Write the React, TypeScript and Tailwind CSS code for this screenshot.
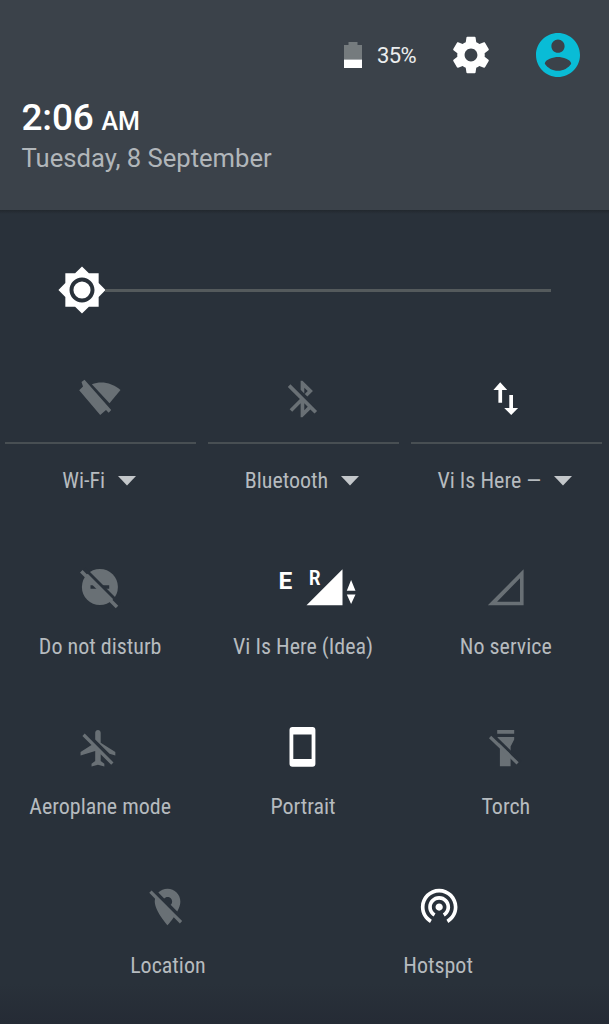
import type { ReactNode } from 'react';

interface TileProps {
  label: string;
  active?: boolean;
  wide?: boolean;
  children: ReactNode;
}

const BatteryIcon = () => (
  <svg width="18" height="26" viewBox="0 0 18 26">
    <path d="M0 3h4.500V0h9v3H18v14.500H0z" fill="#757b7e" />
    <path d="M0 17.500h18V26H0z" fill="#fff" />
  </svg>
);

const SettingsIcon = () => (
  <svg width="44" height="44" viewBox="0 0 24 24" fill="#fff">
    <path d="M19.43 12.98c.04-.32.07-.64.07-.98s-.03-.66-.07-.98l2.11-1.65c.19-.15.24-.42.12-.64l-2-3.46c-.12-.22-.39-.3-.61-.22l-2.49 1c-.52-.4-1.080-.73-1.690-.98l-.38-2.650C14.460 2.180 14.250 2 14 2h-4c-.25 0-.46.18-.49.42l-.38 2.650c-.61.25-1.170.59-1.690.98l-2.490-1c-.23-.09-.49 0-.61.22l-2 3.460c-.13.22-.07.49.12.64l2.110 1.650c-.04.32-.07.65-.07.98s.03.66.07.98l-2.110 1.650c-.19.15-.24.42-.12.64l2 3.460c.12.22.39.3.61.22l2.490-1c.52.4 1.080.73 1.690.98l.38 2.650c.03.24.24.42.49.42h4c.25 0 .46-.18.49-.42l.38-2.650c.61-.25 1.170-.59 1.690-.98l2.490 1c.23.09.49 0 .61-.22l2-3.460c.12-.22.07-.49-.12-.64l-2.110-1.650zM12 15.500c-1.930 0-3.500-1.570-3.500-3.500s1.570-3.500 3.500-3.500 3.500 1.570 3.500 3.500-1.570 3.500-3.500 3.500z" />
  </svg>
);

const UserIcon = () => (
  <svg width="44" height="44" viewBox="2 2 20 20" fill="#09bcd6">
    <path d="M12 2C6.480 2 2 6.480 2 12s4.480 10 10 10 10-4.480 10-10S17.520 2 12 2zm0 3c1.660 0 3 1.340 3 3s-1.340 3-3 3-3-1.340-3-3 1.340-3 3-3zm0 14.200c-2.500 0-4.710-1.280-6-3.220.03-1.990 4-3.080 6-3.080 1.990 0 5.970 1.090 6 3.080-1.290 1.940-3.500 3.220-6 3.220z" />
  </svg>
);

const BrightnessIcon = () => (
  <svg width="50" height="50" viewBox="0 0 24 24" fill="#fff">
    <path d="M20 8.690V4h-4.690L12 .69 8.690 4H4v4.690L.69 12 4 15.310V20h4.690L12 23.310 15.310 20H20v-4.690L23.310 12 20 8.690zM12 18c-3.310 0-6-2.690-6-6s2.690-6 6-6 6 2.690 6 6-2.690 6-6 6z" />
    <circle cx="12" cy="12" r="4.100" />
  </svg>
);

const WifiOff = () => (
  <>
    <path d="M4.500 8 7.500 5.800 34.200 36l-2.500 2.700L29 36l-5.800 5L2.200 16.200 6 12.500z" />
    <path d="M14.900 10.200C24 6.500 35 8.500 43.500 16L32.500 29.300z" />
  </>
);

const BluetoothOff = () => (
  <path
    transform="translate(1.500 3) scale(1.83)"
    d="M13 5.830l1.880 1.880-1.600 1.600 1.410 1.410 3.020-3.020L12 2h-1v5.030l2 2v-3.200zM5.410 4L4 5.410 10.590 12 5 17.590 6.410 19 11 14.410V22h1l4.290-4.290 2.300 2.290L20 18.590 5.410 4zM13 18.170v-3.760l1.880 1.880L13 18.170z"
  />
);

const DataArrows = () => (
  <>
    <path d="M18.200 8.200 25.200 16h-5.100v12.700h-3.700V16h-5z" />
    <path d="M29.200 41 22.200 34h5.100V21H31v13h5.100z" />
  </>
);

const DisturbOff = () => (
  <>
    <circle cx="22.900" cy="23" r="18" />
    <path d="M13.500 21.200h7.500v3.600h-7.500zM25 21.200h7.200v3.600H28z" fill="#29313a" />
    <path d="M7.500 4.500 42.500 39.500" stroke="#29313a" strokeWidth="2.800" />
    <path d="M4.300 7.300 40 43" stroke="currentColor" strokeWidth="3.600" />
  </>
);

const MobileSignal = () => (
  <>
    <text x="35.500" y="25.300" className="font-[Roboto] text-[24.500px] font-bold">E</text>
    <text x="66" y="21.200" textLength="11.500" lengthAdjust="spacingAndGlyphs" className="font-[Roboto] text-[21px] font-bold">R</text>
    <path d="M63.500 41.300 99.500 5.300v36z" />
    <path d="M108.100 16 112.500 26.700h-8.700zM103.800 30.500h8.700l-4.400 9.500z" />
  </>
);

const NoSignal = () => (
  <path fillRule="evenodd" d="M5.800 41.300 41.600 5.300v36zM15.100 37.700H38V14.300z" />
);

const AirplaneOff = () => (
  <path
    transform="translate(-.1 2.3) scale(1.83)"
    d="M13 9V3.500c0-.83-.67-1.500-1.500-1.500S10 2.670 10 3.500v3.680l7.830 7.830L21 16v-2l-8-5zM3 5.270l4.990 4.990L2 14v2l8-2.500V19l-2 1.500V22l3.500-1 3.500 1v-1.500L13 19v-3.730L18.730 21 20 19.730 4.270 4 3 5.270z"
  />
);

const Portrait = () => (
  <path fillRule="evenodd" d="M13.500 3h19.900a3 3 0 0 1 3 3v33.700a3 3 0 0 1-3 3H13.500a3 3 0 0 1-3-3V6a3 3 0 0 1 3-3zM14.300 10.500V35h18.300V10.500z" />
);

const TorchOff = () => (
  <>
    <path d="M15.200 6h17v3.700h-17zM15.200 13h17v2.500l-3.600 7v19.800H17.900V22.500z" />
    <path d="M10.600 10.700 38.100 38" stroke="#29313a" strokeWidth="3" />
    <path d="M8.100 13 35.600 39.300" stroke="currentColor" strokeWidth="3.200" />
  </>
);

const LocationOff = () => (
  <path
    transform="translate(1.6 2) scale(1.83)"
    d="M12 6.500c1.380 0 2.500 1.120 2.500 2.500 0 .74-.33 1.390-.83 1.850l3.630 3.630c.98-1.860 1.700-3.800 1.700-5.480 0-3.870-3.130-7-7-7-1.980 0-3.760.83-5.040 2.150l3.190 3.190c.46-.52 1.110-.84 1.850-.84zm4.370 9.600l-4.630-4.630-.11-.11L3.270 3 2 4.270l3.180 3.180C5.070 7.950 5 8.470 5 9c0 5.250 7 13 7 13s1.670-1.850 3.380-4.350L18.730 21 20 19.730l-3.630-3.630z"
  />
);

const Hotspot = () => (
  <path
    transform="translate(2.2 .3) scale(1.83)"
    d="M12 11c-1.100 0-2 .9-2 2s.9 2 2 2 2-.9 2-2-.9-2-2-2zm6 2c0-3.310-2.690-6-6-6s-6 2.690-6 6c0 2.220 1.210 4.150 3 5.190l1-1.740c-1.190-.7-2-1.970-2-3.450 0-2.210 1.790-4 4-4s4 1.790 4 4c0 1.480-.81 2.750-2 3.450l1 1.740c1.790-1.040 3-2.970 3-5.190zM12 3C6.480 3 2 7.480 2 13c0 3.700 2.010 6.920 4.990 8.650l1-1.730C5.610 18.530 4 15.960 4 13c0-4.420 3.580-8 8-8s8 3.580 8 8c0 2.960-1.610 5.530-4 6.920l1 1.730c2.990-1.730 5-4.950 5-8.650 0-5.520-4.480-10-10-10z"
  />
);

const TileIcon = ({ active, wide, children }: Omit<TileProps, 'label'>) => (
  <svg
    width={wide ? 120 : 48}
    height="48"
    viewBox={wide ? '0 0 120 48' : '0 0 48 48'}
    fill="currentColor"
    className={active ? 'text-white' : 'text-[#697075]'}
  >
    {children}
  </svg>
);

const Label = ({ children }: { children: ReactNode }) => (
  <span className="whitespace-nowrap font-['Roboto_Condensed',Roboto,sans-serif] text-[22px] leading-6 text-[#b6bbbf] [font-stretch:75%]">
    {children}
  </span>
);

const Tile = ({ label, ...icon }: TileProps) => (
  <div className="flex flex-col items-center">
    <TileIcon {...icon} />
    <div className="mt-[23px] flex h-6 pr-px">
      <Label>{label}</Label>
    </div>
  </div>
);

const DualTile = ({ label, ...icon }: TileProps) => (
  <div className="flex flex-col items-center">
    <TileIcon {...icon} />
    <div className="mt-5 h-0.5 w-full bg-[#484f53]" />
    <div className="mt-[25px] flex h-6 items-center gap-[13px] pr-[3px]">
      <Label>{label}</Label>
      <svg width="18" height="10" viewBox="0 0 18 10" fill="#c3c7ca">
        <path d="M0 0h18L9 9.500z" />
      </svg>
    </div>
  </div>
);

export default function App() {
  return (
    <div className="flex h-[1024px] w-[609px] flex-col overflow-hidden bg-[#29313a] font-[Roboto,sans-serif]">
      <header className="h-[210px] bg-[#3b424a]">
        <div className="flex h-[92px] items-center justify-end pt-[17px] pr-[29px]">
          <BatteryIcon />
          <span className="ml-[15px] pt-0.5 text-[22px] tracking-[-0.6px] text-[#eceeef]">35%</span>
          <div className="ml-[33px]">
            <SettingsIcon />
          </div>
          <div className="ml-[43px]">
            <UserIcon />
          </div>
        </div>
        <div className="pt-0.5 pl-[21.5px]">
          <div className="flex items-baseline gap-2 leading-[48px] font-medium text-white">
            <span className="text-[37px] tracking-[-0.2px]">2:06</span>
            <span className="text-[25px]">AM</span>
          </div>
          <div className="-mt-1 text-[25.6px] leading-8 text-[#b1b6ba]">Tuesday, 8 September</div>
        </div>
      </header>
      <div className="h-1 bg-linear-to-b from-[#22282e] to-[#29313a]" />

      <main className="flex flex-1 flex-col bg-linear-to-b from-[#29313a] from-95% to-[#252b35] pr-[7px] pl-[5px]">
        <div className="mt-[51px] flex h-[50px] items-center pr-[51px] pl-[51.5px]">
          <BrightnessIcon />
          <div className="-ml-0.5 h-[3px] flex-1 bg-[#545a5c]" />
        </div>

        <div className="mt-[59px] grid grid-cols-3 gap-x-[11.500px]">
          <DualTile label="Wi-Fi"><WifiOff /></DualTile>
          <DualTile label="Bluetooth"><BluetoothOff /></DualTile>
          <DualTile label="Vi Is Here —" active><DataArrows /></DualTile>
        </div>

        <div className="mt-[71px] grid grid-cols-3 gap-x-[11.500px] gap-y-[64.5px]">
          <Tile label="Do not disturb"><DisturbOff /></Tile>
          <Tile label="Vi Is Here (Idea)" active wide><MobileSignal /></Tile>
          <Tile label="No service"><NoSignal /></Tile>
          <Tile label="Aeroplane mode"><AirplaneOff /></Tile>
          <Tile label="Portrait" active><Portrait /></Tile>
          <Tile label="Torch"><TorchOff /></Tile>
        </div>

        <div className="mt-[64.5px] flex justify-evenly gap-[11px] *:w-[191.67px]">
          <Tile label="Location"><LocationOff /></Tile>
          <Tile label="Hotspot" active><Hotspot /></Tile>
        </div>
      </main>
    </div>
  );
}
